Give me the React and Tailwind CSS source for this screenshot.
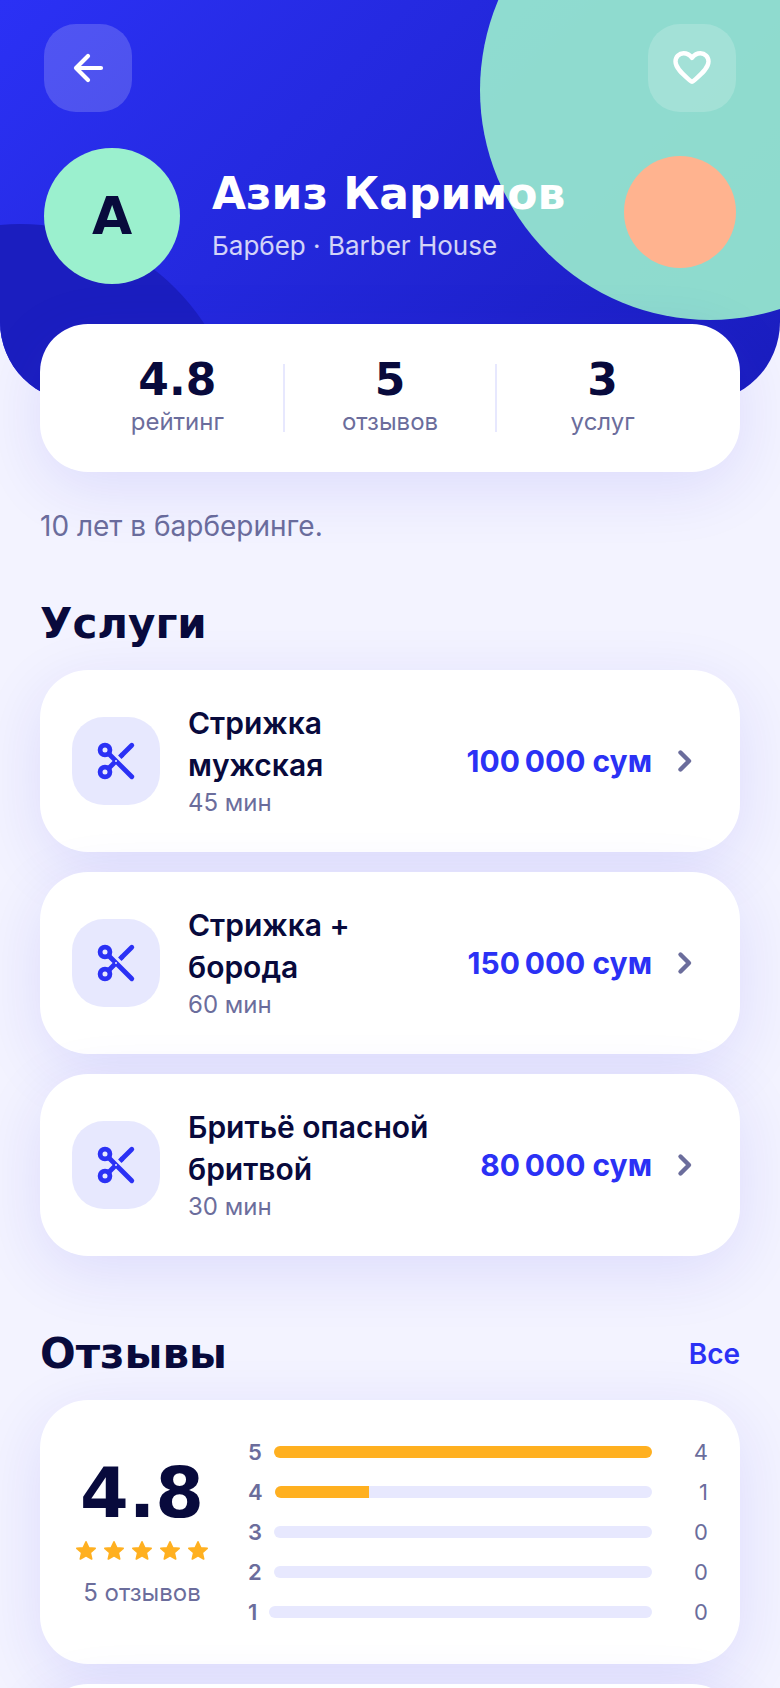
const services = [
  { name: "Стрижка мужская", time: "45 мин", price: "100\u2009000 сум" },
  { name: "Стрижка + борода", time: "60 мин", price: "150\u2009000 сум" },
  { name: "Бритьё опасной бритвой", time: "30 мин", price: "80\u2009000 сум" },
];

const stats = [
  { value: "4.8", label: "рейтинг" },
  { value: "5", label: "отзывов" },
  { value: "3", label: "услуг" },
];

const ratings = [
  { stars: 5, count: 4, percent: 100 },
  { stars: 4, count: 1, percent: 25 },
  { stars: 3, count: 0, percent: 0 },
  { stars: 2, count: 0, percent: 0 },
  { stars: 1, count: 0, percent: 0 },
];

const ScissorsIcon = () => (
  <svg className="size-11" viewBox="0 0 44 44" fill="none" stroke="currentColor" strokeWidth="4.8" strokeLinecap="round">
    <circle cx="11" cy="11" r="4.9" />
    <circle cx="11" cy="33" r="4.9" />
    <path d="M15 15L37.8 37.8M15 29l6-6" />
    <path d="M37.8 6.2L28 16" />
    <path d="M25.8 18.2L28.5 15.5" strokeLinecap="butt" />
    <circle cx="22" cy="22" r="1" fill="#e7e8fe" stroke="none" />
  </svg>
);

const StarIcon = () => (
  <svg className="size-6" viewBox="0 0 24 24" fill="currentColor" stroke="currentColor" strokeWidth="1.6" strokeLinejoin="round">
    <path d="M12 2.8l2.7 5.900 6.500.7-4.900 4.300 1.400 6.300L12 16.800l-5.700 3.200 1.400-6.300L2.800 9.400l6.500-.7z" />
  </svg>
);

const Header = () => (
  <header className="relative overflow-hidden rounded-b-[80px] bg-linear-135 from-[#2b31f5] to-[#1a1dbd] px-11 pt-6 pb-[118px]">
    <div className="absolute -top-[140px] -right-[160px] size-[460px] rounded-full bg-[#9bf0ce] opacity-90" />
    <div className="absolute top-56 -left-[200px] size-[440px] rounded-full bg-[#1b1ebf]" />
    <div className="absolute top-[156px] right-11 size-28 rounded-full bg-[#ffb38f]" />
    <div className="relative flex justify-between">
      <button type="button" aria-label="Назад" className="flex size-[88px] items-center justify-center rounded-[32px] bg-white/18 text-white">
        <svg className="size-11" viewBox="0 0 44 44" fill="none" stroke="currentColor" strokeWidth="4.2" strokeLinecap="round" strokeLinejoin="round">
          <path d="M35 22H10M22 10L10 22l12 12" />
        </svg>
      </button>
      <button type="button" aria-label="В избранное" className="flex size-[88px] items-center justify-center rounded-[32px] bg-white/18 text-white">
        <svg className="size-11" viewBox="0 0 44 44" fill="none" stroke="currentColor" strokeWidth="4.4" strokeLinecap="round" strokeLinejoin="round">
          <path d="M20.5 34.9C15 30 5.5 23 5.5 15.6C5.5 10.8 9.2 7.3 13.6 7.3c3.4 0 6.2 1.7 8.4 4.5 2.2-2.8 5-4.5 8.4-4.5 4.4 0 8.1 3.5 8.1 8.3C38.5 23 29 30 23.5 34.900a2.200 2.200 0 0 1-3 0z" />
        </svg>
      </button>
    </div>
    <div className="relative mt-9 flex items-center gap-8">
      <div className="flex size-[136px] shrink-0 items-center justify-center rounded-full bg-[#9bf0ce] font-['DejaVu_Sans',sans-serif] text-[52px] font-bold text-[#080a3c]">
        А
      </div>
      <div>
        <h1 className="font-['DejaVu_Sans',sans-serif] text-[44px] leading-[48px] font-bold text-white">Азиз Каримов</h1>
        <p className="mt-3 text-[26px] leading-8 text-white/80">Барбер · Barber House</p>
      </div>
    </div>
  </header>
);

const Stats = () => (
  <section className="relative -mt-[78px] flex rounded-[48px] bg-white px-8 py-10 shadow-[0_16px_64px_rgba(50,40,230,0.11)]">
    {stats.map((item) => (
      <div key={item.label} className="h-[68px] flex-1 border-r-2 border-[#e7e8fe] text-center last:border-r-0">
        <p className="font-['DejaVu_Sans',sans-serif] text-[44px] leading-8 font-bold">{item.value}</p>
        <p className="mt-2 text-2xl leading-9 text-[#6b6d9c]">{item.label}</p>
      </div>
    ))}
  </section>
);

const ServiceCard = ({ service }) => (
  <button type="button" className="flex w-full items-center rounded-[48px] bg-white p-8 text-left shadow-[0_16px_64px_rgba(50,40,230,0.11)]">
    <span className="flex size-[88px] shrink-0 items-center justify-center rounded-[32px] bg-[#e7e8fe] text-[#2b31f5]">
      <ScissorsIcon />
    </span>
    <span className="ml-7 flex-1">
      <span className="block max-w-[252px] text-[30px] leading-[42px] font-semibold">{service.name}</span>
      <span className="block text-2xl leading-[34px] text-[#6b6d9c]">{service.time}</span>
    </span>
    <span className="text-[30px] font-bold whitespace-nowrap text-[#2b31f5]">{service.price}</span>
    <svg className="ml-4 size-10 shrink-0 text-[#6b6d9c]" viewBox="0 0 40 40" fill="none" stroke="currentColor" strokeWidth="4.4" strokeLinecap="round" strokeLinejoin="round">
      <path d="M12.5 11.5L21 20l-8.5 8.5" />
    </svg>
  </button>
);

const Reviews = () => (
  <section className="mt-[76px]">
    <div className="flex items-center justify-between">
      <h2 className="font-['DejaVu_Sans',sans-serif] text-[42px] leading-[44px] font-bold">Отзывы</h2>
      <a href="#reviews" className="text-[28px] font-semibold text-[#2b31f5]">Все</a>
    </div>
    <div className="mt-6 flex items-center gap-9 rounded-[48px] bg-white px-8 py-[38px] shadow-[0_16px_64px_rgba(50,40,230,0.11)]">
      <div className="flex w-[140px] flex-col items-center">
        <p className="font-['DejaVu_Sans',sans-serif] text-[70px] leading-[68px] font-bold">4.8</p>
        <div className="mt-3 flex gap-1 text-[#ffb020]">
          {[1, 2, 3, 4, 5].map((n) => <StarIcon key={n} />)}
        </div>
        <p className="mt-[18px] text-2xl leading-6 whitespace-nowrap text-[#6b6d9c]">5 отзывов</p>
      </div>
      <div className="flex flex-1 flex-col gap-3">
        {ratings.map((row) => (
          <div key={row.stars} className="flex h-7 items-center gap-3 text-[22px] text-[#6b6d9c]">
            <span className="font-semibold">{row.stars}</span>
            <div className="h-3 flex-1 overflow-hidden rounded-full bg-[#e7e8fe]">
              <div className="h-full bg-[#ffb020]" style={{ width: `${row.percent}%` }} />
            </div>
            <span className="w-11 text-right">{row.count}</span>
          </div>
        ))}
      </div>
    </div>
    <div id="reviews" className="mt-5 h-40 rounded-[48px] bg-white shadow-[0_16px_64px_rgba(50,40,230,0.11)]" />
  </section>
);

export default function App() {
  return (
    <div className="h-screen overflow-x-hidden overflow-y-auto bg-[#f3f3ff] font-['Inter',sans-serif] text-[#080a3c] [scrollbar-width:none]">
      <Header />
      <main className="px-10">
        <Stats />
        <p className="mt-[34px] text-[28px] leading-10 text-[#6b6d9c]">10 лет в барберинге.</p>
        <section className="mt-14">
          <h2 className="font-['DejaVu_Sans',sans-serif] text-[42px] leading-[44px] font-bold">Услуги</h2>
          <div className="mt-6 flex flex-col gap-5">
            {services.map((service) => <ServiceCard key={service.name} service={service} />)}
          </div>
        </section>
        <Reviews />
      </main>
    </div>
  );
}
